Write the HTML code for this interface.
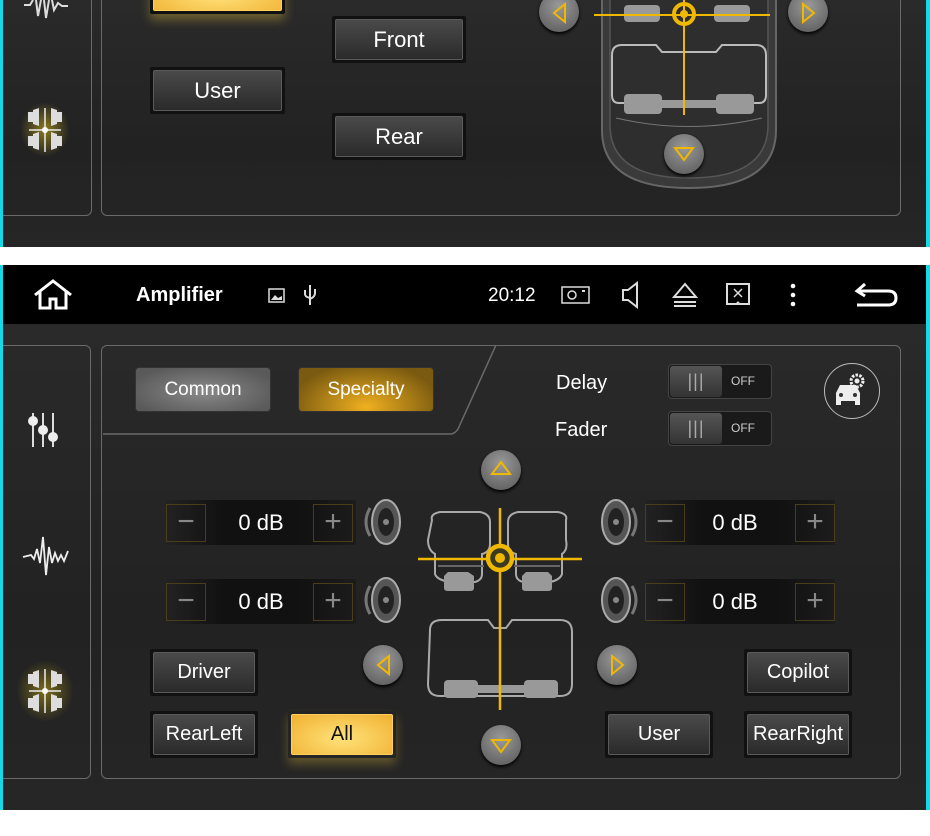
<!DOCTYPE html>
<html><head><meta charset="utf-8"><style>
*{margin:0;padding:0;box-sizing:border-box}
body{width:930px;height:836px;overflow:hidden;background:#fff;font-family:"Liberation Sans",sans-serif;position:relative}
.scr{position:absolute;left:0;width:930px;background:linear-gradient(180deg,#2a2a2a,#222 60%,#262626);overflow:hidden}
.cy{position:absolute;top:0;bottom:0;background:#16d8e8;z-index:5}
.a{position:absolute}
.pnl{position:absolute;border:1.5px solid #6a6a6a;border-radius:6px}
.btn{position:absolute;background:#111;padding:3px;border-radius:2px}
.btn div{width:100%;height:100%;background:linear-gradient(#4a4a4a,#2a2a2a);border:1px solid #5a5a5a;border-radius:2px;color:#fff;font-size:20px;display:flex;align-items:center;justify-content:center}
.btn.y div{background:radial-gradient(ellipse at 50% 60%,#ffe27a,#f0b030);color:#111;border-color:#ffd060}
.rnd{position:absolute;width:40px;height:40px;border-radius:50%;background:radial-gradient(circle at 50% 35%,#9a9a9a,#6a6a6a 70%,#555);box-shadow:0 2px 3px #000}
.row{position:absolute;height:45px;width:190px;background:linear-gradient(90deg,#222,#111 30%,#111 70%,#1c1c1c)}
.bx{position:absolute;top:4px;width:40px;height:38px;border:1px solid #4a3e1a;color:#888;font-size:30px;font-weight:100;text-align:center;line-height:34px}
.db{position:absolute;top:0;width:100%;text-align:center;line-height:45px;color:#fff;font-size:22px}
.tg{position:absolute;width:104px;height:35px;background:#1a1a1a;border:1px solid #444;border-radius:4px}
.tg .k{position:absolute;left:1px;top:1px;width:52px;height:31px;background:linear-gradient(#555,#333);border-radius:3px;color:#aaa;font-size:18px;text-align:center;line-height:30px;letter-spacing:1px}
.tg .o{position:absolute;left:62px;top:9px;color:#ccc;font-size:12px}
.lbl{position:absolute;color:#fff;font-size:20px}
</style></head><body>

<!-- top screenshot -->
<div class="scr" style="top:0;height:247px">
  <div class="cy" style="left:0;width:3px"></div><div class="cy" style="right:0;width:4px"></div>
  <div class="pnl" style="left:-5px;top:-10px;width:97px;height:226px"></div>
  <div class="pnl" style="left:101px;top:-10px;width:800px;height:226px"></div>
  <svg class="a" style="left:22px;top:0" width="48" height="20"><path d="M2 5 L8 5 L11 0 M14 0 L16 16 L19 0 M22 0 L24 18 L27 0 M30 0 L32 10 L36 3 L40 6 L46 6" stroke="#ddd" stroke-width="2" fill="none"/></svg>
  <div class="a" style="left:20px;top:102px;width:50px;height:55px;border-radius:50%;background:radial-gradient(#8a7a20,transparent 70%)"></div>
  <svg class="a" style="left:24px;top:108px" width="42" height="44"><g fill="#ddd"><path d="M4 4h5v10H4zM9 2l6-2v18l-6-2z"/><path d="M38 4h-5v10h5zM33 2l-6-2v18l6-2z"/><path d="M4 28h5v10H4zM9 26l6-2v18l-6-2z"/><path d="M38 28h-5v10h5zM33 26l-6-2v18l6-2z"/></g><path d="M21 0v44M5 22h32" stroke="#eee" stroke-width="1.5"/><circle cx="21" cy="22" r="3" fill="#fff"/></svg>
  <div class="btn y" style="left:150px;top:-30px;width:135px;height:44px;box-shadow:0 6px 10px rgba(240,200,60,.35)"><div>All</div></div>
  <div class="btn" style="left:150px;top:67px;width:135px;height:47px"><div style="font-size:22px">User</div></div>
  <div class="btn" style="left:332px;top:16px;width:134px;height:47px"><div style="font-size:22px">Front</div></div>
  <div class="btn" style="left:332px;top:113px;width:134px;height:47px"><div style="font-size:22px">Rear</div></div>
  <svg class="a" style="left:594px;top:0" width="190" height="192">
    <path d="M8 0 V130 Q8 188 95 188 Q182 188 182 130 V0" fill="#3a3a3a" stroke="#666" stroke-width="2"/>
    <path d="M16 0 V125 Q16 178 95 178 Q174 178 174 125 V0" fill="#2e2e2e" stroke="#555" stroke-width="1.5"/>
    <path d="M18 55 Q18 45 28 45 H62 L68 52 H122 L128 45 H162 Q172 45 172 55 V95 Q172 103 165 103 H25 Q18 103 18 95Z" fill="none" stroke="#bbb" stroke-width="2"/>
    <rect x="30" y="94" width="38" height="20" rx="4" fill="#999"/><rect x="122" y="94" width="38" height="20" rx="4" fill="#999"/><rect x="60" y="100" width="70" height="8" fill="#999"/>
    <path d="M22 118 Q95 135 168 118" stroke="#777" fill="none"/>
    <rect x="30" y="5" width="36" height="17" rx="4" fill="#999"/><rect x="120" y="5" width="36" height="17" rx="4" fill="#999"/>
    <path d="M0 15 H176 M90 0 V115" stroke="#f0b800" stroke-width="2"/>
    <circle cx="90" cy="14" r="10" fill="none" stroke="#f0b800" stroke-width="4"/><circle cx="90" cy="14" r="4" fill="#f0b800"/>
  </svg>
  <div class="rnd" style="left:539px;top:-8px"></div><svg class="a" style="left:550px;top:2px" width="20" height="22"><path d="M15 2 L4 11 L15 20Z" fill="none" stroke="#f0b800" stroke-width="2"/></svg>
  <div class="rnd" style="left:788px;top:-8px"></div><svg class="a" style="left:799px;top:2px" width="20" height="22"><path d="M4 2 L15 11 L4 20Z" fill="none" stroke="#f0b800" stroke-width="2"/></svg>
  <div class="rnd" style="left:664px;top:134px"></div><svg class="a" style="left:673px;top:146px" width="22" height="16"><path d="M2 2 H20 L11 14Z" fill="none" stroke="#f0b800" stroke-width="2"/></svg>
</div>

<!-- status bar -->
<div class="a" style="left:0;top:265px;width:930px;height:59px;background:#000">
  <div class="cy" style="left:0;width:3px"></div><div class="cy" style="right:0;width:4px"></div>
  <svg class="a" style="left:32px;top:14px" width="44" height="32"><path d="M3 16 L21 2 L39 16 M8 12 V29 H18 V20 H24 V29 H34 V12" fill="none" stroke="#fff" stroke-width="3"/></svg>
  <div class="a" style="left:136px;top:19px;color:#fff;font-size:20px;font-weight:bold">Amplifier</div>
  <svg class="a" style="left:268px;top:19px" width="60" height="22"><rect x="1" y="5" width="15" height="13" fill="none" stroke="#ddd" stroke-width="1.5"/><path d="M3 16 L7 11 L10 14 L14 12 V16Z" fill="#ddd"/><path d="M42 1 V21 M37 6 V10 Q37 13 42 14 M47 5 V9 Q47 13 42 15" stroke="#ddd" stroke-width="2" fill="none"/></svg>
  <div class="a" style="left:488px;top:20px;color:#fff;font-size:19px">20:12</div>
  <svg class="a" style="left:560px;top:16px" width="340" height="28">
    <rect x="2" y="6" width="27" height="16" fill="none" stroke="#ddd" stroke-width="1.5"/><circle cx="12" cy="14" r="4" fill="none" stroke="#ddd" stroke-width="1.5"/><rect x="22" y="9" width="3" height="2" fill="#ddd"/>
    <path d="M63 9 H68 L77 2 V26 L68 19 H63Z" fill="none" stroke="#ddd" stroke-width="2"/>
    <path d="M114 16 L125 3 L136 16Z M114 21 H136 M114 25 H136" fill="none" stroke="#ddd" stroke-width="2"/>
    <rect x="167" y="3" width="22" height="20" fill="none" stroke="#ddd" stroke-width="2"/><path d="M174 8 L182 16 M182 8 L174 16" stroke="#ddd" stroke-width="1.5"/><circle cx="178" cy="22" r="1.5" fill="#ddd"/>
    <circle cx="233" cy="5" r="2.3" fill="#fff"/><circle cx="233" cy="14" r="2.3" fill="#fff"/><circle cx="233" cy="23" r="2.3" fill="#fff"/>
    <path d="M305 3 L297 10 L305 15 M298 10 H328 Q336 10 336 17 Q336 24 328 24 H297" fill="none" stroke="#fff" stroke-width="3"/>
  </svg>
</div>

<!-- bottom screenshot -->
<div class="scr" style="top:324px;height:486px">
  <div class="cy" style="left:0;width:3px"></div><div class="cy" style="right:0;width:4px"></div>
  <div class="pnl" style="left:-5px;top:21px;width:96px;height:434px"></div>
  <div class="pnl" style="left:101px;top:21px;width:800px;height:434px"></div>
  <svg class="a" style="left:100px;top:20px" width="400" height="92"><path d="M3 90 H350 Q355 90 358 85 L396 1" fill="none" stroke="#6a6a6a" stroke-width="1.5"/></svg>
  <svg class="a" style="left:26px;top:87px" width="38" height="40"><path d="M7 2V36 M17 2V36 M27 2V36" stroke="#ddd" stroke-width="2"/><circle cx="7" cy="10" r="5" fill="#eee"/><circle cx="17" cy="19" r="5" fill="#eee"/><circle cx="27" cy="26" r="5" fill="#eee"/></svg>
  <svg class="a" style="left:22px;top:205px" width="48" height="50"><path d="M1 28 L9 26 L12 30 L15 20 L18 34 L21 8 L24 46 L27 18 L30 34 L33 24 L36 32 L39 26 L42 32 L46 22" stroke="#eee" stroke-width="1.8" fill="none"/></svg>
  <div class="a" style="left:16px;top:336px;width:58px;height:62px;border-radius:50%;background:radial-gradient(#7a6c1a,transparent 70%)"></div>
  <svg class="a" style="left:24px;top:345px" width="42" height="44"><g fill="#ddd"><path d="M4 5h5v10H4zM9 3l6-2v18l-6-2z"/><path d="M38 5h-5v10h5zM33 3l-6-2v18l6-2z"/><path d="M4 29h5v10H4zM9 27l6-2v18l-6-2z"/><path d="M38 29h-5v10h5zM33 27l-6-2v18l6-2z"/></g><path d="M21 0v44M5 22h32" stroke="#eee" stroke-width="1.5"/><circle cx="21" cy="22" r="3" fill="#fff"/></svg>
  <div class="a" style="left:135px;top:43px;width:136px;height:45px;border-radius:4px;border:1px solid #333;background:radial-gradient(ellipse at 50% 55%,#8a8a8a,#5a5a5a 80%);color:#fff;font-size:19px;text-align:center;line-height:43px">Common</div>
  <div class="a" style="left:298px;top:43px;width:136px;height:45px;border-radius:4px;border:1px solid #333;background:radial-gradient(ellipse at 50% 90%,#f0b020,#7a5a10 80%);color:#fff;font-size:19px;text-align:center;line-height:43px">Specialty</div>
  <div class="lbl" style="left:556px;top:48px">Delay</div>
  <div class="lbl" style="left:555px;top:95px">Fader</div>
  <div class="tg" style="left:668px;top:40px"><div class="k">|||</div><div class="o">OFF</div></div>
  <div class="tg" style="left:668px;top:87px"><div class="k">|||</div><div class="o">OFF</div></div>
  <div class="a" style="left:824px;top:39px;width:56px;height:56px;border-radius:50%;border:1.5px solid #bbb"></div>
  <svg class="a" style="left:832px;top:47px" width="40" height="38"><path d="M4 30 V22 L8 14 H24 L28 22 V30 Z" fill="#eee"/><rect x="4" y="29" width="5" height="5" fill="#eee"/><rect x="23" y="29" width="5" height="5" fill="#eee"/><circle cx="9" cy="24" r="2" fill="#333"/><circle cx="23" cy="24" r="2" fill="#333"/><circle cx="25" cy="10" r="6" fill="none" stroke="#eee" stroke-width="3" stroke-dasharray="2.5 1.3"/><circle cx="25" cy="10" r="2.5" fill="#eee"/></svg>
  <div class="row" style="left:166px;top:176px"><div class="db">0 dB</div><div class="bx" style="left:0">−</div><div class="bx" style="left:147px">+</div></div>
  <div class="row" style="left:166px;top:255px"><div class="db">0 dB</div><div class="bx" style="left:0">−</div><div class="bx" style="left:147px">+</div></div>
  <div class="row" style="left:645px;top:176px"><div class="db" style="left:-5px">0 dB</div><div class="bx" style="left:0">−</div><div class="bx" style="left:150px">+</div></div>
  <div class="row" style="left:645px;top:255px"><div class="db" style="left:-5px">0 dB</div><div class="bx" style="left:0">−</div><div class="bx" style="left:150px">+</div></div>
  <svg class="a" style="left:364px;top:174px" width="40" height="50"><ellipse cx="22" cy="24" rx="14" ry="22" fill="#555" stroke="#aaa" stroke-width="2"/><ellipse cx="22" cy="24" rx="8" ry="14" fill="#222"/><circle cx="22" cy="24" r="3" fill="#888"/><path d="M6 10 Q-2 24 6 38" stroke="#777" stroke-width="3" fill="none"/></svg>
  <svg class="a" style="left:364px;top:252px" width="40" height="50"><ellipse cx="22" cy="24" rx="14" ry="22" fill="#555" stroke="#aaa" stroke-width="2"/><ellipse cx="22" cy="24" rx="8" ry="14" fill="#222"/><circle cx="22" cy="24" r="3" fill="#888"/><path d="M6 10 Q-2 24 6 38" stroke="#777" stroke-width="3" fill="none"/></svg>
  <svg class="a" style="left:598px;top:174px" width="40" height="50"><ellipse cx="18" cy="24" rx="14" ry="22" fill="#555" stroke="#aaa" stroke-width="2"/><ellipse cx="18" cy="24" rx="8" ry="14" fill="#222"/><circle cx="18" cy="24" r="3" fill="#888"/><path d="M34 10 Q42 24 34 38" stroke="#777" stroke-width="3" fill="none"/></svg>
  <svg class="a" style="left:598px;top:252px" width="40" height="50"><ellipse cx="18" cy="24" rx="14" ry="22" fill="#555" stroke="#aaa" stroke-width="2"/><ellipse cx="18" cy="24" rx="8" ry="14" fill="#222"/><circle cx="18" cy="24" r="3" fill="#888"/><path d="M34 10 Q42 24 34 38" stroke="#777" stroke-width="3" fill="none"/></svg>
  <svg class="a" style="left:410px;top:176px" width="180" height="212">
    <g fill="none" stroke="#aaa" stroke-width="2">
      <path d="M22 20 Q20 14 30 12 H70 Q80 14 80 22 V44 Q80 52 72 54 V74 Q72 80 65 82 H40 Q27 80 25 74 V54 Q18 50 18 40Z"/>
      <path d="M98 22 Q98 14 108 12 H148 Q158 14 156 20 V40 Q158 50 152 54 V74 Q150 80 140 82 H113 Q106 80 106 74 V54 Q98 52 98 44Z"/>
      <path d="M28 66 H74 M104 66 H150" stroke="#666"/>
      <path d="M20 130 Q20 120 32 120 H78 L84 128 H96 L102 120 H150 Q162 120 162 132 V184 Q162 196 150 196 H30 Q18 196 18 184Z"/>
    </g>
    <path d="M34 76 L38 72 H58 L64 76 V88 Q64 91 60 91 H38 Q34 91 34 88Z" fill="#999"/>
    <path d="M112 76 L116 72 H138 L142 76 V88 Q142 91 138 91 H116 Q112 91 112 88Z" fill="#999"/>
    <rect x="34" y="180" width="34" height="18" rx="4" fill="#999"/><rect x="114" y="180" width="34" height="18" rx="4" fill="#999"/><rect x="64" y="185" width="54" height="8" fill="#999"/>
    <path d="M8 59 H172 M90 8 V210" stroke="#f0b800" stroke-width="2.5"/>
    <circle cx="90" cy="58" r="12" fill="#3a3a20" stroke="#f0b800" stroke-width="4.5"/><circle cx="90" cy="58" r="5" fill="#f0b800"/>
  </svg>
  <div class="rnd" style="left:481px;top:126px"></div><svg class="a" style="left:490px;top:136px" width="22" height="16"><path d="M2 14 H20 L11 2Z" fill="none" stroke="#f0b800" stroke-width="2"/></svg>
  <div class="rnd" style="left:481px;top:401px"></div><svg class="a" style="left:490px;top:414px" width="22" height="16"><path d="M2 2 H20 L11 14Z" fill="none" stroke="#f0b800" stroke-width="2"/></svg>
  <div class="rnd" style="left:363px;top:321px"></div><svg class="a" style="left:374px;top:330px" width="20" height="22"><path d="M15 2 L4 11 L15 20Z" fill="none" stroke="#f0b800" stroke-width="2"/></svg>
  <div class="rnd" style="left:597px;top:321px"></div><svg class="a" style="left:608px;top:330px" width="20" height="22"><path d="M4 2 L15 11 L4 20Z" fill="none" stroke="#f0b800" stroke-width="2"/></svg>
  <div class="btn" style="left:150px;top:325px;width:108px;height:47px"><div>Driver</div></div>
  <div class="btn" style="left:150px;top:387px;width:108px;height:47px"><div>RearLeft</div></div>
  <div class="btn y" style="left:288px;top:387px;width:108px;height:47px;background:transparent;box-shadow:0 6px 10px rgba(240,200,60,.3)"><div>All</div></div>
  <div class="btn" style="left:605px;top:387px;width:108px;height:47px"><div>User</div></div>
  <div class="btn" style="left:744px;top:325px;width:108px;height:47px"><div>Copilot</div></div>
  <div class="btn" style="left:744px;top:387px;width:108px;height:47px"><div>RearRight</div></div>
</div>
</body></html>
